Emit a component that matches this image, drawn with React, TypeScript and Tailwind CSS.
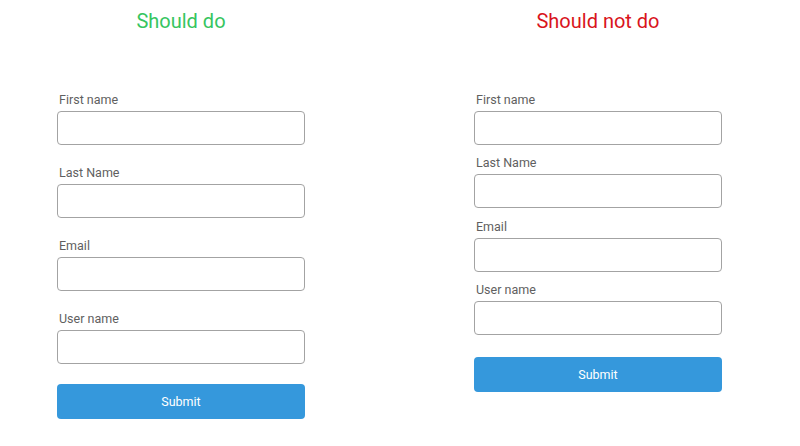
import React from 'react';

interface FormColumnProps {
  title: string;
  titleClass: string;
  fieldGap: string;
  buttonGap: string;
}

const fields = ['First name', 'Last Name', 'Email', 'User name'];

function FormColumn({ title, titleClass, fieldGap, buttonGap }: FormColumnProps) {
  return (
    <div className="flex w-[248px] flex-col">
      <h2 className={`pt-[10px] text-center text-[20px] leading-[23px] ${titleClass}`}>{title}</h2>
      <form className={`mt-[60px] flex flex-col ${fieldGap}`}>
        {fields.map((label) => (
          <label key={label} className="flex flex-col">
            <span className="pl-[2px] text-[12.5px] leading-[14px] text-[#5f5f5f]">{label}</span>
            <input
              type="text"
              className="mt-[4px] h-[34px] w-full rounded-[4px] border border-[#a3a3a3] bg-white"
            />
          </label>
        ))}
      </form>
      <button
        type="button"
        className={`${buttonGap} h-[35px] w-full rounded-[4px] bg-[#3598dc] pt-[2px] text-[12.5px] text-white`}
      >
        Submit
      </button>
    </div>
  );
}

export default function App() {
  return (
    <div className="flex h-[446px] w-[800px] gap-[169px] bg-white pl-[57px] font-['Roboto',sans-serif]">
      <FormColumn title="Should do" titleClass="text-[#36c55f]" fieldGap="gap-[21px]" buttonGap="mt-[20px]" />
      <FormColumn title="Should not do" titleClass="text-[#d9141c]" fieldGap="gap-[11.4px]" buttonGap="mt-[22px]" />
    </div>
  );
}
